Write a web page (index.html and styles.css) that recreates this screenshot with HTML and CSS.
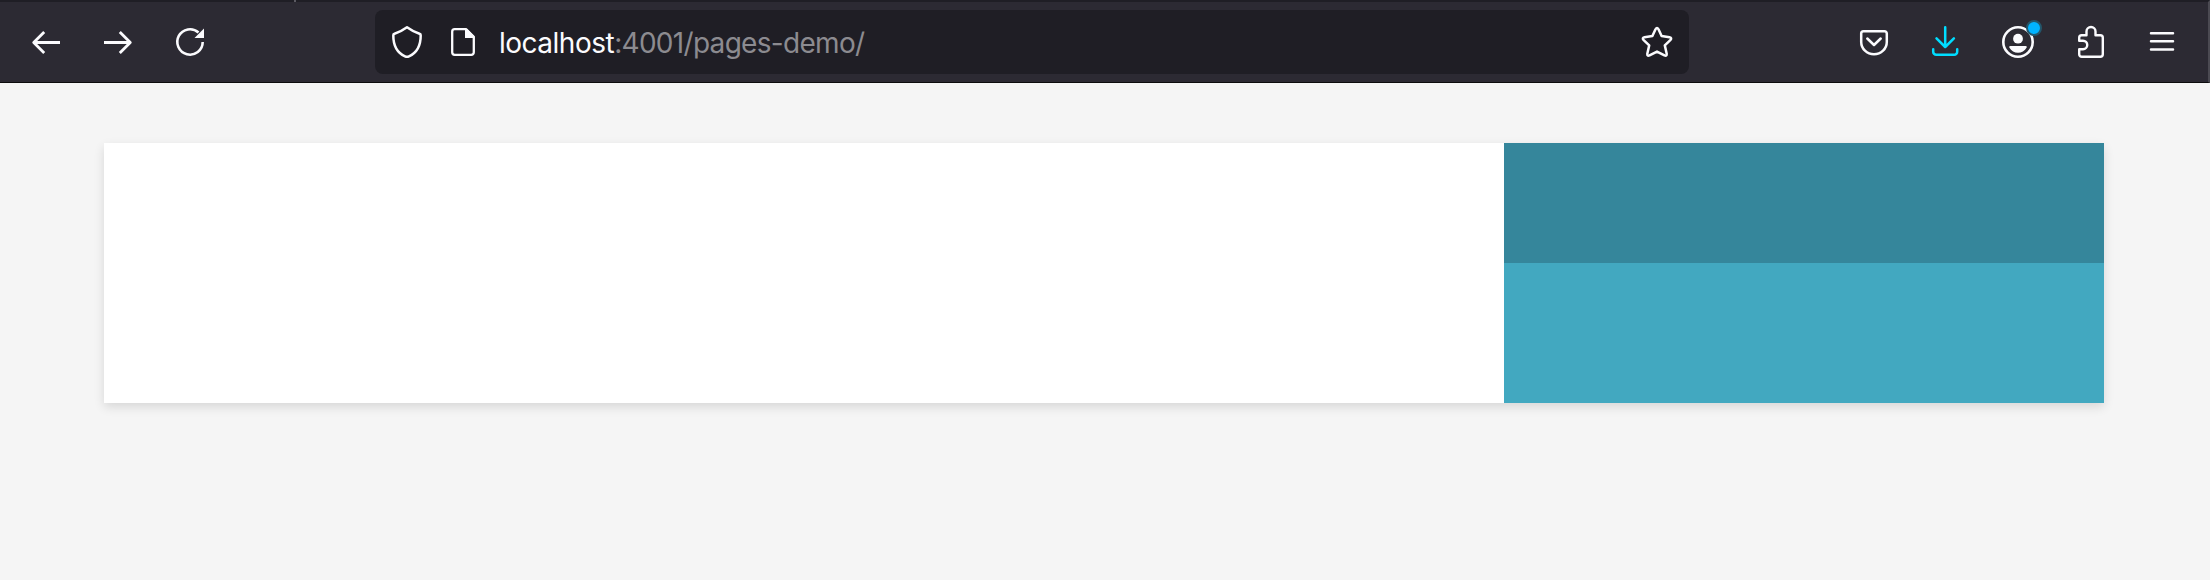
FILE: index.html
```html
<!DOCTYPE html>
<html lang="en">
<head>
<meta charset="utf-8">
<title>pages-demo</title>
<link rel="stylesheet" href="styles.css">
</head>
<body>
<header class="toolbar">
  <div class="tab-edge"></div>
  <nav class="nav-buttons">
    <svg class="icon arrow" viewBox="0 0 32 32"><path d="M30 16.500H4M14.200 6 3.700 16.500 14.200 27" stroke-width="2.800"/></svg>
    <svg class="icon arrow" viewBox="0 0 32 32"><path d="M2 16.500h26M17.800 6l10.500 10.500L17.800 27" stroke-width="2.800"/></svg>
    <svg class="icon" viewBox="0 0 32 32"><path d="M28.700 16A12.700 12.700 0 1 1 24.500 6.500" stroke-width="2.600" stroke-linecap="butt"/><path class="solid" d="M30 2.500V12h-9.500Z"/></svg>
  </nav>
  <div class="url-bar">
    <svg class="icon" viewBox="0 0 32 32"><path d="M16 1.300C12 4.200 7 6.700 3.500 7.700Q2.200 8.100 2.300 9.500C2.300 20 6.500 27 14 30.300Q16 31.300 18 30.300C25.500 27 29.700 20 29.700 9.500Q29.800 8.100 28.500 7.700C25 6.700 20 4.200 16 1.300Z" stroke-width="2.500"/></svg>
    <svg class="icon" viewBox="0 0 32 32"><path d="M7.700 3.200H19l7.800 7.800v15.300a2.500 2.500 0 0 1-2.500 2.500H7.700a2.500 2.500 0 0 1-2.500-2.500V5.700a2.500 2.500 0 0 1 2.500-2.500Z" stroke-width="2.300"/><path class="solid" d="M18 2.500h2l7.500 7.500v2H18Z"/></svg>
    <div class="url"><span class="host">localhost</span>:4001/pages-demo/</div>
    <svg class="icon" viewBox="0 0 32 32"><path d="M14.500 3.300Q16 .9 17.500 3.300L20.600 10.100 28.500 11.200Q31.400 11.900 29.300 14.200L23.800 19.400 25.700 27.800Q25.900 30.500 23.500 29.400L16 25.600 8.500 29.400Q6.100 30.500 6.300 27.800L8.200 19.400 2.700 14.200Q.6 11.900 3.500 11.200L11.400 10.100Z" stroke-width="2.500"/></svg>
  </div>
  <nav class="actions">
    <svg class="icon" viewBox="0 0 32 32"><path d="M5.500 5.300h21a2.300 2.300 0 0 1 2.300 2.300V16a12.800 12.300 0 0 1-25.600 0V7.600a2.300 2.300 0 0 1 2.300-2.300ZM9.300 12.500l6.700 6.500 6.700-6.500" stroke-width="2.500"/></svg>
    <svg class="icon download" viewBox="0 0 32 32"><path d="M15.200 1.300V20M6.500 12.300l8.700 8.700 8.700-8.700M3.200 23.200v2.600a3 3 0 0 0 3 3h18a3 3 0 0 0 3-3v-2.600" stroke-width="2.500"/></svg>
    <div class="account">
      <svg class="icon" viewBox="0 0 32 32"><circle cx="16" cy="16" r="14.700" stroke-width="2.600"/><circle class="solid" cx="16" cy="12.700" r="4.900"/><path class="solid" d="M8.300 20h15.400q1.700 0 1 1.500c-3.700 7-13.700 7-17.400 0q-.7-1.500 1-1.500Z"/></svg>
      <span class="badge"></span>
    </div>
    <svg class="icon" viewBox="0 0 32 32"><path d="M12.500 9.200V5.500a4.500 4.500 0 0 1 9 0v3.700h4.800a2.500 2.500 0 0 1 2.500 2.500v16.600a2.500 2.500 0 0 1-2.500 2.500H7.700a2.500 2.500 0 0 1-2.500-2.500V23.200H9a4.250 4.250 0 0 0 0-8.500H5.200v-3a2.500 2.500 0 0 1 2.500-2.500Z" stroke-width="2.400"/></svg>
    <svg class="icon" viewBox="0 0 32 32"><path d="M5 7.300h22M5 15.300h22M5 23.400h22" stroke-width="2.500"/></svg>
  </nav>
</header>
<main class="page">
  <div class="card">
    <section class="content"></section>
    <aside class="sidebar">
      <div class="side-top"></div>
      <div class="side-bottom"></div>
    </aside>
  </div>
</main>
</body>
</html>
```
FILE: styles.css
```css
* {
  box-sizing: border-box;
}

body {
  margin: 0;
  min-height: 580px;
  background: #f5f5f5;
  font-family: Inter, "Liberation Sans", sans-serif;
}

.toolbar {
  position: relative;
  display: flex;
  align-items: center;
  height: 83px;
  padding: 0 30px;
  border-top: 2px solid #1f1e25;
  border-bottom: 1px solid #0c0c0d;
  border-right: 2px solid #4b4a52;
  background: #2c2a33;
}

.tab-edge {
  position: absolute;
  top: -2px;
  left: 294px;
  width: 2px;
  height: 2px;
  background: #5b5a62;
}

.nav-buttons,
.actions {
  display: flex;
  gap: 40px;
}

.icon {
  display: block;
  flex: none;
  width: 32px;
  height: 32px;
  overflow: visible;
  fill: none;
  stroke: #fbfbfe;
  stroke-linecap: round;
  stroke-linejoin: round;
}

.icon .solid {
  fill: #fbfbfe;
  stroke: none;
}

.arrow {
  stroke-linecap: butt;
}

.download {
  stroke: #00ddff;
}

.url-bar {
  display: flex;
  align-items: center;
  gap: 24px;
  width: 1314px;
  height: 64px;
  margin-left: 169px;
  padding: 0 16px;
  border-radius: 8px;
  background: #1f1e25;
}

.url {
  flex: 1;
  margin-left: -4px;
  padding-top: 2px;
  font-size: 28px;
  line-height: 34px;
  letter-spacing: -0.7px;
  white-space: nowrap;
  color: #8c8b90;
}

.host {
  letter-spacing: -0.5px;
  color: #fbfbfe;
}

.actions {
  margin-left: auto;
}

.account {
  position: relative;
}

.badge {
  position: absolute;
  top: -6px;
  right: -8px;
  width: 16px;
  height: 16px;
  border: 2px solid #23566b;
  border-radius: 50%;
  background: #00b3ff;
}

.page {
  padding: 60px 106px 0 104px;
}

.card {
  display: grid;
  grid-template-columns: 1400px 600px;
  height: 260px;
  background: #fff;
  box-shadow: 0 4px 10px rgba(0, 0, 0, 0.12);
}

.sidebar {
  display: grid;
  grid-template-rows: 120px 140px;
}

.side-top {
  background: #35869b;
}

.side-bottom {
  background: #42a8c0;
}
```
